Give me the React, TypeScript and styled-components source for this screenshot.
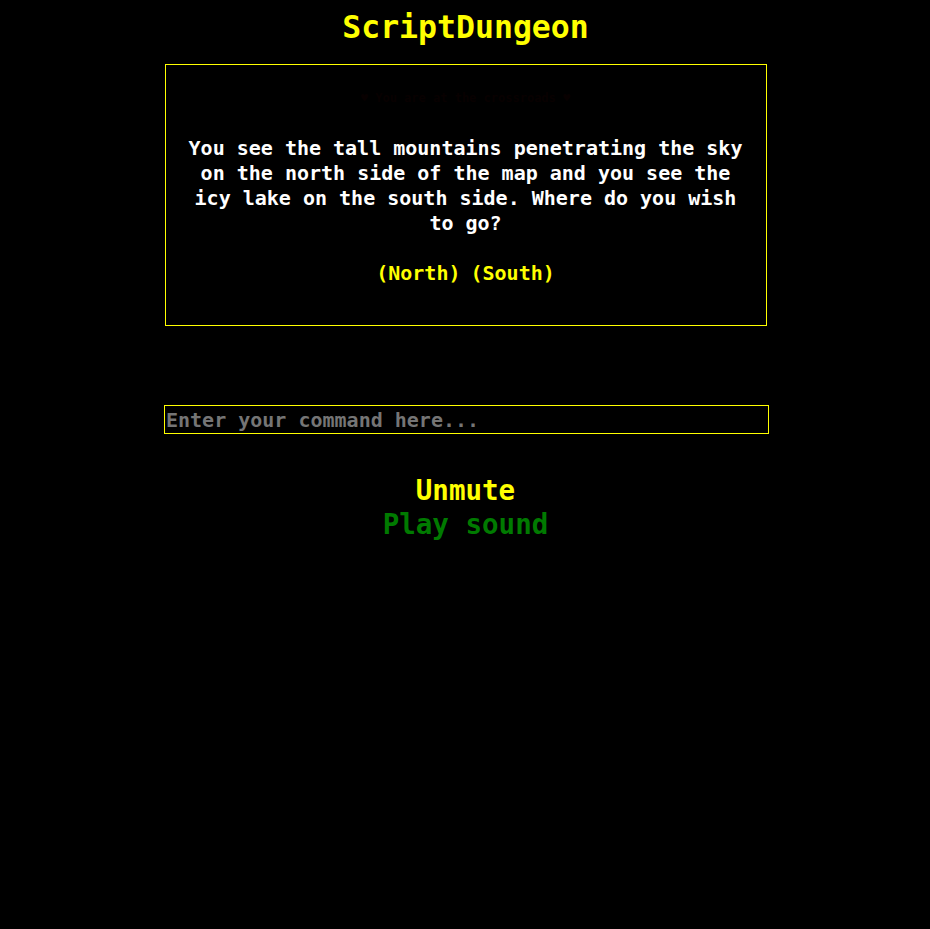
import React from "react";
import styled, { createGlobalStyle } from "styled-components";

const Global = createGlobalStyle`
  html, body { margin: 0; padding: 0; background: #000; }
  body { font-family: "DejaVu Sans Mono", "Liberation Mono", monospace; }
`;

const Page = styled.div`
  min-height: 929px;
  background: #000;
  display: flex;
  flex-direction: column;
  align-items: center;
  padding-left: 1px;
  box-sizing: border-box;
`;

const Title = styled.h1`
  margin: 8px 0 18px;
  font-size: 31.5px;
  line-height: 38px;
  font-weight: bold;
  color: #ffff00;
`;

const Screen = styled.div`
  width: 602px;
  height: 262px;
  box-sizing: border-box;
  border: 1px solid #ffff00;
  padding: 21px 20px 0;
  text-align: center;
  font-size: 20px;
  line-height: 25px;
  font-weight: bold;
  color: #fff;
`;

const Faint = styled.p`
  margin: 0 0 25px;
  color: #080000;
  font-size: 12px;
`;

const Story = styled.p`
  margin: 0 0 25px;
`;

const Choices = styled.div`
  display: flex;
  justify-content: center;
  gap: 10px;
`;

const Choice = styled.span`
  color: #ffff00;
`;

const CommandFrame = styled.div`
  margin-top: 79px;
  margin-left: 2px;
  width: 605px;
  height: 29px;
  box-sizing: border-box;
  border: 1px solid #ffff00;
  background: #000;
  display: flex;
`;

const Command = styled.input`
  appearance: none;
  flex: 1;
  min-width: 0;
  height: 100%;
  box-sizing: border-box;
  background: transparent;
  border: none;
  outline: none;
  padding: 0 1px;
  font-family: "DejaVu Sans Mono", "Liberation Mono", monospace;
  font-size: 20px;
  font-weight: bold;
  color: #fff;
  caret-color: #fff;
  &:focus, &:focus-visible { outline: none; }
  &::placeholder { color: #757575; }
`;

const Controls = styled.div`
  margin-top: 39px;
  display: flex;
  flex-direction: column;
  align-items: center;
`;

const TextButton = styled.button<{ $tone: string }>`
  background: none;
  border: none;
  padding: 0;
  cursor: pointer;
  font-family: "DejaVu Sans Mono", "Liberation Mono", monospace;
  font-size: 27.5px;
  line-height: 34px;
  font-weight: bold;
  color: ${(p) => p.$tone};
`;

export default function App() {
  return (
    <>
      <Global />
      <Page>
        <Title>ScriptDungeon</Title>
        <Screen>
          <Faint>♥ You are at the crossroads ♥</Faint>
          <Story>
            You see the tall mountains penetrating the sky on the north side of the map and
            you see the icy lake on the south side. Where do you wish to go?
          </Story>
          <Choices>
            <Choice>(North)</Choice>
            <Choice>(South)</Choice>
          </Choices>
        </Screen>
        <CommandFrame>
          <Command placeholder="Enter your command here..." autoFocus />
        </CommandFrame>
        <Controls>
          <TextButton $tone="#ffff00">Unmute</TextButton>
          <TextButton $tone="#007a00">Play sound</TextButton>
        </Controls>
      </Page>
    </>
  );
}
